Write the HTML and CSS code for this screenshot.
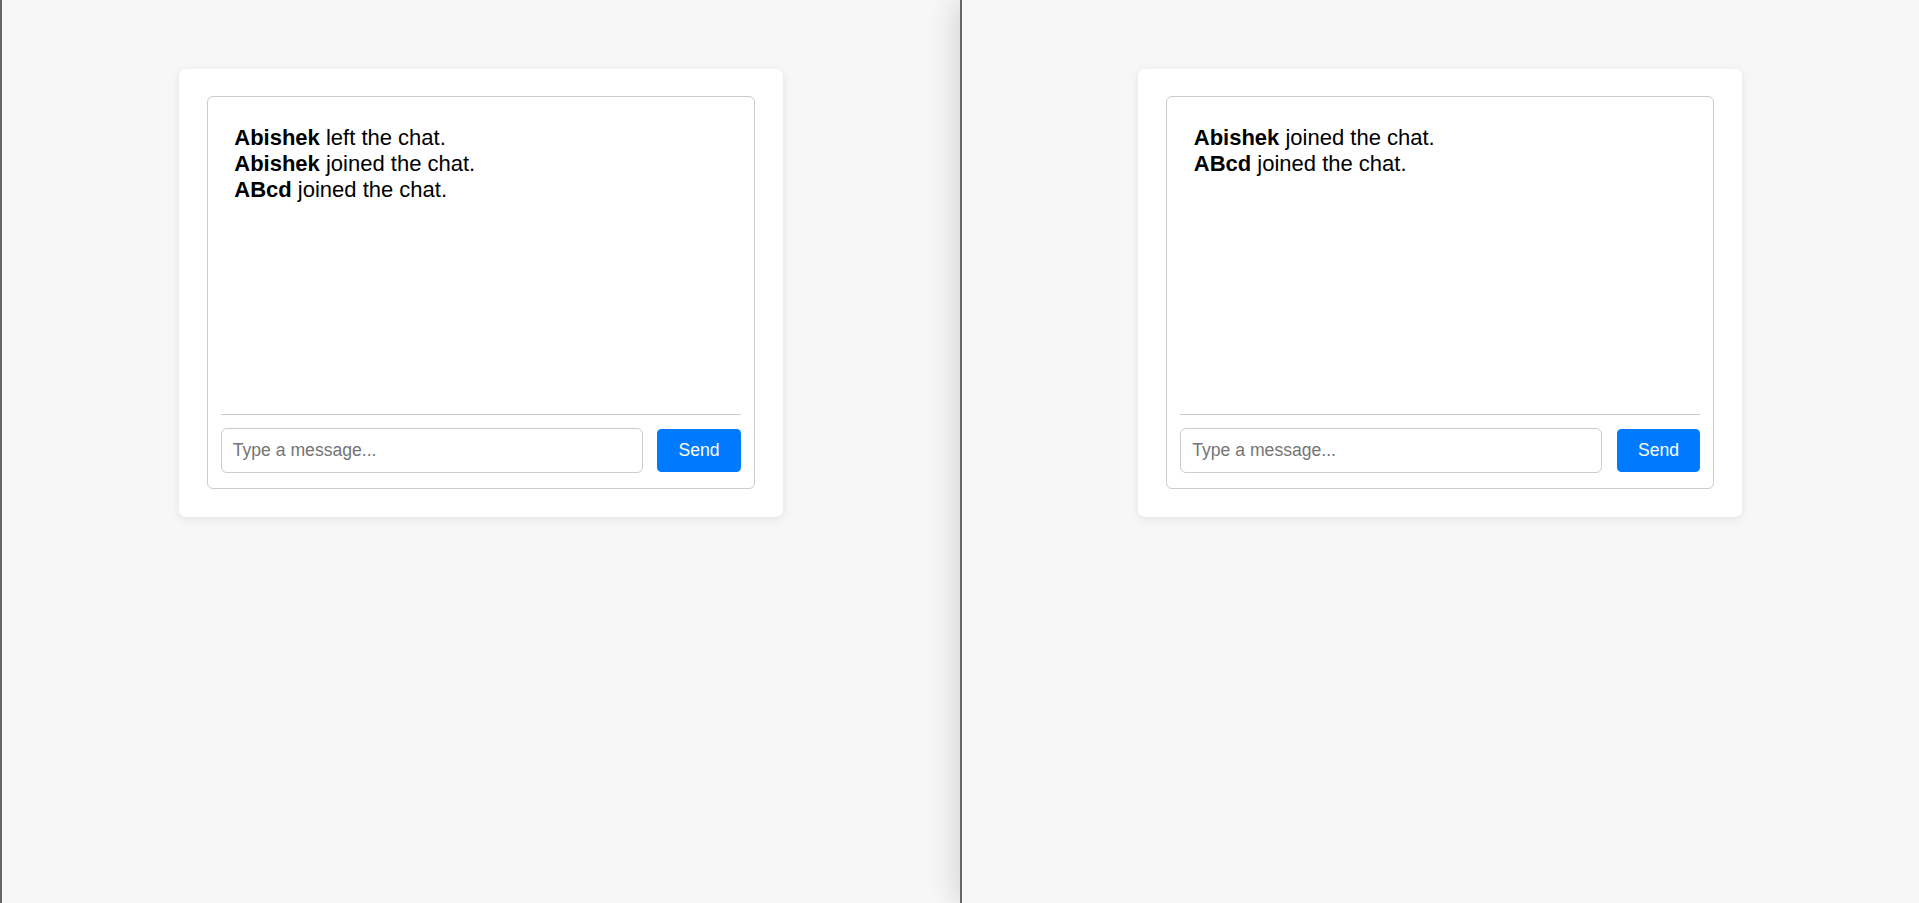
FILE: index.html
```html
<!DOCTYPE html>
<html lang="en">
<head>
<meta charset="utf-8">
<title>Chat</title>
<link rel="stylesheet" href="styles.css">
</head>
<body>
<div class="panes">
  <section class="pane">
    <div class="card">
      <div class="chat">
        <div class="messages">
          <div class="msg"><strong>Abishek</strong> left the chat.</div>
          <div class="msg"><strong>Abishek</strong> joined the chat.</div>
          <div class="msg"><strong>ABcd</strong> joined the chat.</div>
        </div>
        <form class="composer">
          <input class="input" type="text" placeholder="Type a message...">
          <button class="send" type="button">Send</button>
        </form>
      </div>
    </div>
  </section>
  <section class="pane pane-right">
    <div class="card">
      <div class="chat">
        <div class="messages">
          <div class="msg"><strong>Abishek</strong> joined the chat.</div>
          <div class="msg"><strong>ABcd</strong> joined the chat.</div>
        </div>
        <form class="composer">
          <input class="input" type="text" placeholder="Type a message...">
          <button class="send" type="button">Send</button>
        </form>
      </div>
    </div>
  </section>
</div>
</body>
</html>
```
FILE: styles.css
```css
html, body {
  margin: 0;
  padding: 0;
  height: 100%;
}
body {
  font-family: "Liberation Sans", Arial, sans-serif;
  background: #f7f7f7;
  color: #000;
  overflow: hidden;
}
.panes {
  display: flex;
  height: 100%;
}
.pane {
  flex: 1 1 0;
  min-width: 0;
  border-left: 2px solid #666;
  background: #f7f7f7;
  display: flex;
  justify-content: center;
  align-items: flex-start;
  padding-top: 69px;
}
.pane-right {
  box-shadow: -6px 0 26px rgba(0, 0, 0, 0.13);
}
.card {
  box-sizing: border-box;
  width: 604px;
  background: #fff;
  border-radius: 7px;
  padding: 27px 28px 28px;
  box-shadow: 0 2px 9px rgba(0, 0, 0, 0.09);
}
.chat {
  border: 1px solid #ccc;
  border-radius: 6px;
  padding: 13px 13px 15px;
  display: flex;
  flex-direction: column;
}
.messages {
  box-sizing: border-box;
  height: 304px;
  padding: 15px 14px 14px 13.5px;
  font-size: 22px;
  line-height: 26px;
}
.msg strong {
  font-weight: 700;
}
.composer {
  margin: 0;
  border-top: 1px solid #ccc;
  padding-top: 13px;
  display: flex;
  align-items: center;
  gap: 14.5px;
}
.input {
  box-sizing: border-box;
  flex: 1 1 auto;
  min-width: 0;
  height: 45px;
  border: 1px solid #ccc;
  border-radius: 6px;
  padding: 0 11px;
  font-family: "Liberation Sans", Arial, sans-serif;
  font-size: 17.6px;
  color: #222;
  background: #fff;
  outline: none;
}
.input::placeholder {
  color: #757575;
}
.send {
  box-sizing: border-box;
  width: 83.5px;
  height: 43.5px;
  border: none;
  border-radius: 4.5px;
  background: #007bff;
  color: #fff;
  font-family: "Liberation Sans", Arial, sans-serif;
  font-size: 17.6px;
  padding: 0;
  cursor: pointer;
}
```
